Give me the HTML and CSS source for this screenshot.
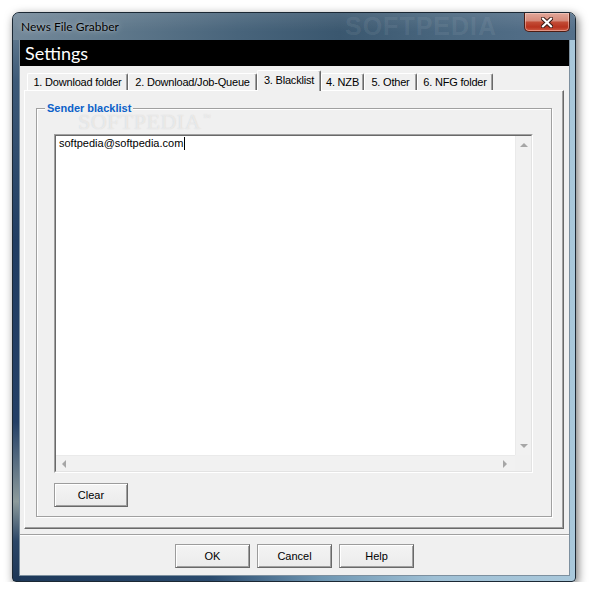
FILE: index.html
```html
<!DOCTYPE html>
<html>
<head>
<meta charset="utf-8">
<title>News File Grabber - Settings</title>
<link rel="stylesheet" href="styles.css">
</head>
<body>
<div class="window">
  <div class="titlebar">
    <span class="title">News File Grabber</span>
    <span class="title-mark">SOFTPEDIA</span>
    <div class="close">
      <svg width="12" height="11" viewBox="0 0 12 11">
        <path d="M2 1.8 L10 9.2 M10 1.8 L2 9.2" stroke="#3b1d17" stroke-width="4.2" stroke-linecap="square" fill="none"/>
        <path d="M2 1.8 L10 9.2 M10 1.8 L2 9.2" stroke="#ffffff" stroke-width="2.2" stroke-linecap="square" fill="none"/>
      </svg>
    </div>
  </div>
  <div class="frame">
    <div class="client">
      <div class="header">Settings</div>
      <div class="tabs">
        <div class="tab">1. Download folder</div>
        <div class="tab">2. Download/Job-Queue</div>
        <div class="tab active">3. Blacklist</div>
        <div class="tab">4. NZB</div>
        <div class="tab">5. Other</div>
        <div class="tab">6. NFG folder</div>
      </div>
      <div class="panel">
        <div class="group">
          <span class="legend">Sender blacklist</span>
          <span class="mark">SOFTPEDIA<span class="tm">™</span></span>
          <div class="edit">
            <div class="edit-inner">
              <div class="edit-row">
                <div class="edit-text">softpedia@softpedia.com<span class="caret"></span></div>
                <div class="vscroll">
                  <span class="arr up"></span>
                  <span class="arr down"></span>
                </div>
              </div>
              <div class="hscroll">
                <div class="htrack">
                  <span class="arr left"></span>
                  <span class="arr right"></span>
                </div>
                <div class="corner"></div>
              </div>
            </div>
          </div>
          <div class="btn clear">Clear</div>
        </div>
      </div>
      <div class="footer">
        <div class="btn">OK</div>
        <div class="btn">Cancel</div>
        <div class="btn">Help</div>
      </div>
    </div>
  </div>
</div>
</body>
</html>
```

FILE: styles.css
```css
* { box-sizing: border-box; }
html, body { margin: 0; padding: 0; background: #ffffff; }
body {
  font-family: "Liberation Sans", Arial, sans-serif;
  font-size: 11px;
  color: #000;
}

.window {
  margin: 12px 0 0 12px;
  width: 564px;
  height: 570px;
  border: 1px solid #1b2834;
  border-radius: 7px 7px 4px 4px;
  overflow: hidden;
  background:
    linear-gradient(180deg, #6f8698 0%, #3d5a78 12%, #213e63 40%, #233f66 72%, #8d9b9c 86%, #2b4667 93%, #1c3656 100%) left top / 8px 100% no-repeat,
    linear-gradient(90deg, #1d3859 0%, #2a4a6d 35%, #6e96b2 55%, #9fc0d5 75%, #a9c8db 100%);
  box-shadow: 2px 3px 10px rgba(0, 0, 0, 0.55);
}

.titlebar {
  position: relative;
  height: 27px;
  display: flex;
  align-items: center;
  padding-left: 8px;
  background:
    linear-gradient(180deg, rgba(255,255,255,0.10), rgba(255,255,255,0) 70%),
    linear-gradient(90deg, #74899a 0%, #5f788b 18%, #48647b 40%, #3a576f 58%, #4a677f 78%, #55708a 100%);
}
.title {
  font-family: Lato, "Liberation Sans", sans-serif;
  font-size: 12px;
  color: #000;
  text-shadow: 0 0 6px rgba(255,255,255,0.55), 0 0 2px rgba(255,255,255,0.35);
}
.title-mark {
  position: absolute;
  left: 332px;
  top: 0;
  height: 27px;
  font-family: "Liberation Sans", sans-serif;
  font-weight: bold;
  font-size: 25px;
  line-height: 27px;
  letter-spacing: 1px;
  color: rgba(255,255,255,0.08);
}
.close {
  position: absolute;
  top: 0;
  right: 5px;
  width: 46px;
  height: 19px;
  border: 1px solid #4d1d14;
  border-top: 0;
  border-radius: 0 0 5px 5px;
  background: linear-gradient(180deg, #e2a79a 0%, #d68b7b 42%, #c24b35 52%, #b8331f 78%, #cd5a42 100%);
  box-shadow: inset 0 0 0 1px rgba(255, 225, 215, 0.45);
  display: flex;
  align-items: center;
  justify-content: center;
}

.frame {
  padding: 0 6px 6px 7px;
}
.client {
  width: 549px;
  height: 535px;
  background: #f0f0f0;
  box-shadow: 0 0 0 1px #7d909f;
}

.header {
  height: 26px;
  background: #000;
  color: #fff;
  font-family: Lato, "Liberation Sans", sans-serif;
  font-size: 18px;
  line-height: 26px;
  padding-left: 5px;
}

.tabs {
  position: relative;
  z-index: 1;
  height: 24px;
  display: flex;
  align-items: flex-end;
  padding-left: 7px;
}
.tab {
  height: 17px;
  display: flex;
  align-items: center;
  justify-content: center;
  letter-spacing: -0.2px;
  white-space: nowrap;
  border-top: 1px solid #fff;
  border-left: 1px solid #fff;
  border-right: 1px solid #696969;
  border-radius: 2px 2px 0 0;
  box-shadow: inset -1px 0 0 #a0a0a0;
  background: #f0f0f0;
}
.tab:nth-child(1) { width: 101px; }
.tab:nth-child(2) { width: 129px; }
.tab:nth-child(3) { width: 64px; }
.tab:nth-child(4) { width: 43px; }
.tab:nth-child(5) { width: 53px; }
.tab:nth-child(6) { width: 76px; }
.tab.active {
  height: 21px;
  margin-bottom: -1px;
  padding-bottom: 3px;
}

.panel {
  margin: 0 5px 0 4px;
  height: 439px;
  border: 1px solid;
  border-color: #fff #696969 #696969 #fff;
  box-shadow: inset -1px -1px 0 #a0a0a0;
  padding: 17px 11px 0 11px;
}

.group {
  position: relative;
  height: 409px;
  border: 1px solid #a0a0a0;
  box-shadow: 1px 1px 0 #fff, inset 1px 1px 0 #fff;
  padding: 25px 18px 0 17px;
}
.legend {
  position: absolute;
  left: 8px;
  top: -8px;
  padding: 0 2px;
  background: #f0f0f0;
  font-weight: bold;
  font-size: 11px;
  line-height: 14px;
  color: #0b61c9;
}
.mark {
  position: absolute;
  left: 41px;
  top: -1px;
  font-family: "Liberation Serif", serif;
  font-size: 22px;
  line-height: 20px;
  letter-spacing: 0.5px;
  color: rgba(255,255,255,0.55);
  text-shadow: 0 0 1px rgba(160,160,160,0.45);
  pointer-events: none;
}
.mark .tm {
  font-size: 8px;
  vertical-align: 9px;
  margin-left: 2px;
}

.edit {
  width: 479px;
  height: 339px;
  border: 1px solid;
  border-color: #a0a0a0 #fff #fff #a0a0a0;
}
.edit-inner {
  height: 100%;
  border: 1px solid;
  border-color: #696969 #e3e3e3 #e3e3e3 #696969;
  display: flex;
  flex-direction: column;
}
.edit-row {
  flex: 1;
  display: flex;
}
.edit-text {
  flex: 1;
  background: #fff;
  padding: 1px 3px;
  line-height: 13px;
}
.caret {
  display: inline-block;
  width: 1px;
  height: 13px;
  background: #000;
  vertical-align: top;
  margin-left: 1px;
}
.vscroll {
  width: 16px;
  background: #f1f1f1;
  border-left: 1px solid #eaeaea;
  display: flex;
  flex-direction: column;
  justify-content: space-between;
  align-items: center;
  padding: 7px 0 7px;
}
.hscroll {
  height: 16px;
  display: flex;
}
.htrack {
  flex: 1;
  background: #f1f1f1;
  border-top: 1px solid #eaeaea;
  display: flex;
  justify-content: space-between;
  align-items: center;
  padding: 0 8px 0 6px;
}
.corner {
  width: 16px;
  background: #f0f0f0;
}
.arr {
  display: block;
  width: 0;
  height: 0;
}
.arr.up {
  border-left: 4px solid transparent;
  border-right: 4px solid transparent;
  border-bottom: 4px solid #a6a6a6;
}
.arr.down {
  border-left: 4px solid transparent;
  border-right: 4px solid transparent;
  border-top: 4px solid #a6a6a6;
}
.arr.left {
  border-top: 4px solid transparent;
  border-bottom: 4px solid transparent;
  border-right: 4px solid #a6a6a6;
}
.arr.right {
  border-top: 4px solid transparent;
  border-bottom: 4px solid transparent;
  border-left: 4px solid #a6a6a6;
}

.btn {
  width: 75px;
  height: 24px;
  display: flex;
  align-items: center;
  justify-content: center;
  font-size: 11px;
  background: linear-gradient(180deg, #f4f4f4, #ebebeb);
  border: 1px solid;
  border-color: #9c9c9c #696969 #696969 #9c9c9c;
  box-shadow: inset 1px 1px 0 #fff, inset -1px -1px 0 #a0a0a0;
}
.btn.clear {
  width: 74px;
  margin-top: 10px;
}

.footer {
  margin-top: 5px;
  border-top: 1px solid #a0a0a0;
  box-shadow: inset 0 1px 0 #fff;
  padding-top: 9px;
  display: flex;
  justify-content: center;
  gap: 7px;
}
```
